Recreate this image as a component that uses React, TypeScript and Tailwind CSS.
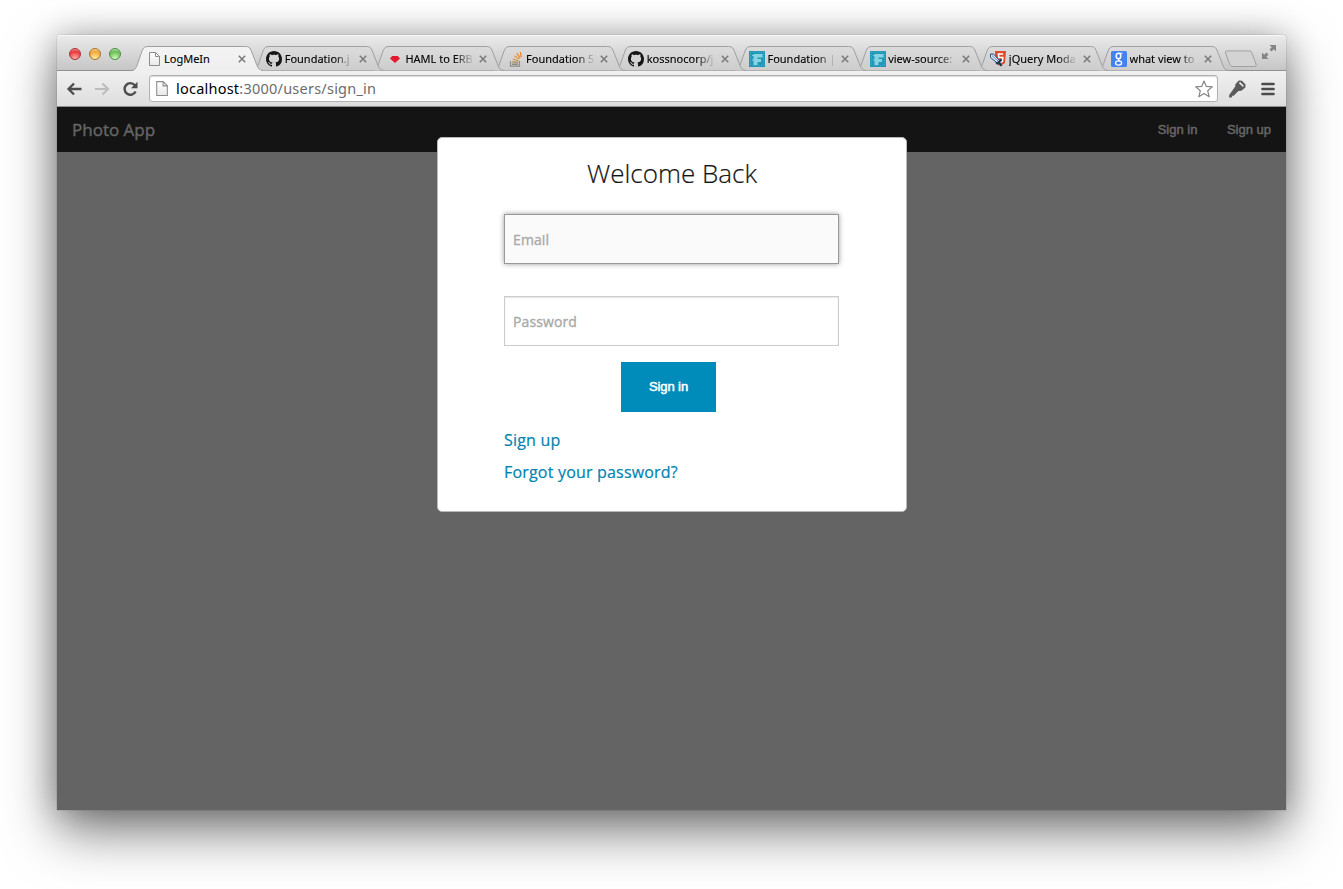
import React from "react";

type Icon = "page" | "github" | "ruby" | "stack" | "foundation" | "jquery" | "google";

function PageIcon() {
  return (
    <>
      <defs>
        <linearGradient id="sheet" x1="0" y1="0" x2="0" y2="1">
          <stop offset="0" stopColor="#fff" />
          <stop offset="1" stopColor="#e9e9e9" />
        </linearGradient>
      </defs>
      <path d="M3.5 1.5h6l4 4v9h-10z" fill="url(#sheet)" stroke="#8c8c8c" />
      <path d="M9.5 1.5v4h4" fill="none" stroke="#8c8c8c" />
    </>
  );
}

function Favicon({ icon }: { icon: Icon }) {
  return (
    <svg className="h-4 w-4 shrink-0" viewBox="0 0 16 16">
      {icon === "page" && <PageIcon />}
      {icon === "github" && (
        <path
          fill="#161616"
          d="M8 0C3.58 0 0 3.58 0 8c0 3.54 2.29 6.53 5.47 7.59.4.07.55-.17.55-.38 0-.19-.01-.82-.01-1.49-2.01.37-2.53-.49-2.69-.94-.09-.23-.48-.94-.82-1.13-.28-.15-.68-.52-.01-.53.63-.01 1.08.58 1.23.82.72 1.21 1.87.87 2.33.66.07-.52.28-.87.51-1.07-1.78-.2-3.64-.89-3.64-3.95 0-.87.31-1.59.82-2.15-.08-.2-.36-1.02.08-2.12 0 0 .67-.21 2.2.82.64-.18 1.32-.27 2-.27s1.36.09 2 .27c1.53-1.04 2.2-.82 2.2-.82.44 1.1.16 1.92.08 2.12.51.56.82 1.27.82 2.15 0 3.07-1.87 3.75-3.65 3.95.29.25.54.73.54 1.48 0 1.07-.01 1.93-.01 2.2 0 .21.15.46.55.38A8.01 8.01 0 0 0 16 8c0-4.42-3.58-8-8-8z"
        />
      )}
      {icon === "ruby" && <path d="M5.2 5h5.6L13 7.6 8 12 3 7.6z" fill="#e3192d" />}
      {icon === "stack" && (
        <g fill="none">
          <path d="M2.5 10v5.2h9V10" stroke="#8b8b8b" strokeWidth="1.2" />
          <path d="M4 13.2h6" stroke="#8b8277" strokeWidth="1.4" />
          <path d="M4.2 10.8l5.8.6" stroke="#a98a56" strokeWidth="1.3" />
          <path d="M4.8 8l5.6 1.8" stroke="#cf9547" strokeWidth="1.3" />
          <path d="M6.3 4.8l5 3.3" stroke="#ec9839" strokeWidth="1.3" />
          <path d="M8.8 2.2l3.2 4.7M12.3.8l.9 5.4" stroke="#f7882f" strokeWidth="1.3" />
        </g>
      )}
      {icon === "foundation" && (
        <>
          <path fill="#2397b8" d="M0 0h16v16H0z" />
          <path d="M1.5 1v14M14.5 1v14M4 14.5h9M4 1h9" stroke="#3badc9" strokeDasharray="1 1" />
          <path d="M4.5 14V3h9v3.500H8.5v1.500H12v3H8.500V14z" fill="#86d3e1" />
          <path d="M3 4.500h2M3 9h2" stroke="#86d3e1" />
        </>
      )}
      {icon === "jquery" && (
        <>
          <path d="M5 0h11l-1 12-4.500 3-5-2.500z" fill="#dd4b27" />
          <path d="M13.200 3H8.500l.3 3.500h4l-.4 4-2.500.8" fill="none" stroke="#fff" strokeWidth="1.600" />
          <path d="M.5 3v3.500l8 6.500 2-2.500L3.500 3z" fill="#dceaf5" stroke="#244d73" strokeWidth="1" />
          <path d="M2 4.500l7 6.500" stroke="#598bb5" />
          <path d="M6.500 13l5-4.500M9 11.500l2.500 3.500" stroke="#18385b" strokeWidth="2" />
        </>
      )}
      {icon === "google" && (
        <>
          <rect width="16" height="16" rx="1.5" fill="#4382f0" />
          <g fill="none" stroke="#fff">
            <ellipse cx="7.5" cy="5" rx="2.3" ry="2.8" strokeWidth="1.5" />
            <path d="M8 2.2h3.5M8 7.8c-1.3 1.2-.3 1.7 1 2.3" strokeWidth="1.1" />
            <ellipse cx="7.6" cy="12" rx="3" ry="2.1" strokeWidth="1.3" />
          </g>
        </>
      )}
    </svg>
  );
}

const tabs: { icon: Icon; title: string }[] = [
  { icon: "page", title: "LogMeIn" },
  { icon: "github", title: "Foundation.j" },
  { icon: "ruby", title: "HAML to ERB" },
  { icon: "stack", title: "Foundation 5" },
  { icon: "github", title: "kossnocorp/j" },
  { icon: "foundation", title: "Foundation |" },
  { icon: "foundation", title: "view-source:" },
  { icon: "jquery", title: "jQuery Moda" },
  { icon: "google", title: "what view to" },
];

function Tab({ icon, title, active, order }: { icon: Icon; title: string; active: boolean; order: number }) {
  return (
    <div className="relative h-[25px] w-[120.7px] shrink-0" style={{ zIndex: order }}>
      <svg className="absolute top-0 left-0 h-[25px] w-[134px]" viewBox="0 0 134 25">
        <defs>
          <linearGradient id="idleTab" x1="0" y1="0" x2="0" y2="1">
            <stop offset="0" stopColor="#dcdcdc" />
            <stop offset="1" stopColor="#cdcdcd" />
          </linearGradient>
          <linearGradient id="activeTab" x1="0" y1="0" x2="0" y2="1">
            <stop offset="0" stopColor="#f3f3f3" />
            <stop offset="1" stopColor="#efefef" />
          </linearGradient>
        </defs>
        <path
          d="M0 24.5C4 24.5 5 22 6 19.5L11 5C12.3 1.8 13.5.5 17 .5H114.500C118 .5 119 1.800 120.300 5L126 19.500C127 22 128.500 24.500 132 24.500"
          fill={active ? "url(#activeTab)" : "url(#idleTab)"}
          stroke="#a0a0a0"
        />
        {active && <path d="M3 24.500H130" stroke="#efefef" strokeWidth="1.200" />}
      </svg>
      <div className="relative flex h-full items-center pl-[14.500px]">
        <Favicon icon={icon} />
        <span
          className={
            "ml-[2.500px] w-[68.500px] text-[11px] leading-4 whitespace-nowrap text-black [-webkit-text-stroke:0.12px_black] " +
            (active ? "" : "[mask-image:linear-gradient(to_right,black_72%,transparent_100%)]")
          }
        >
          {title}
        </span>
        <svg className="ml-[5.500px] h-2 w-2 shrink-0" viewBox="0 0 8 8">
          <path d="M.8.8l6.400 6.400M7.200.8L.8 7.200" stroke="#7b7b7b" strokeWidth="1.600" />
        </svg>
      </div>
    </div>
  );
}

function TitleBar() {
  return (
    <div className="flex h-[36px] shrink-0 rounded-t-[4px] border-b border-[#919191] bg-linear-to-b from-[#ebebeb] to-[#c6c6c6] shadow-[inset_0_1px_0_#f8f8f8]">
      <div className="flex w-[74px] shrink-0 gap-2 pt-[13px] pl-3">
        <span className="h-3 w-3 rounded-full border border-[#a53535] bg-[radial-gradient(circle_at_50%_95%,#ffb4ac,#e9393b_65%,#ffabab)]" />
        <span className="h-3 w-3 rounded-full border border-[#a5722b] bg-[radial-gradient(circle_at_50%_95%,#fff0a0,#f0a63b_65%,#ffe5ae)]" />
        <span className="h-3 w-3 rounded-full border border-[#4b8e42] bg-[radial-gradient(circle_at_50%_95%,#d5ffb5,#69bd58_65%,#d4f4cc)]" />
      </div>
      <div className="relative z-10 mt-[11px] flex">
        {tabs.map((tab, i) => (
          <Tab key={i} icon={tab.icon} title={tab.title} active={i === 0} order={tabs.length - i} />
        ))}
      </div>
      <svg className="mt-[15px] ml-[7px] h-[18px] w-[33px] shrink-0" viewBox="0 0 33 18">
        <path
          d="M3.500.900H25C27 .900 27.500 1.500 28 3L32 14C32.500 16 32 16.500 30 16.500H9C7 16.500 6.200 15.500 5.500 13.500L1.500 3C1 1.500 1.500.900 3.500.900Z"
          fill="#d3d3d3"
          stroke="#a0a0a0"
        />
      </svg>
      <svg className="mt-[10px] ml-[5px] h-[14px] w-[14px] shrink-0" viewBox="0 0 14 14" fill="#858585">
        <path d="M7.500 0H14v6.500l-2.200-2.200-2.200 2.200-2.100-2.100 2.200-2.200zM0 7.500l2.200 2.200 2.200-2.200 2.100 2.100-2.200 2.200L6.500 14H0z" />
      </svg>
    </div>
  );
}

function Toolbar() {
  return (
    <div className="flex h-[36px] shrink-0 items-start border-b border-[#8e8e8e] bg-linear-to-b from-[#f0f0f0] to-[#dedede] pt-1">
      <div className="flex h-[27px] w-[92px] shrink-0 items-center pl-[9px]">
        <svg className="h-4 w-4" viewBox="0 0 16 16">
          <path d="M15.500 8H2.500M8 2.500L2.500 8 8 13.500" fill="none" stroke="#4d4d4d" strokeWidth="2.300" />
        </svg>
        <svg className="ml-3 h-4 w-4" viewBox="0 0 16 16">
          <path d="M1 8h13M8.500 2.500L14 8l-5.500 5.500" fill="none" stroke="#bdbdbd" strokeWidth="2.200" />
        </svg>
        <svg className="ml-3 h-4 w-4" viewBox="0 0 16 16">
          <path d="M12.800 4.200A5.800 5.800 0 1 0 13.600 10.500" fill="none" stroke="#4d4d4d" strokeWidth="2.400" />
          <path d="M15.500.7v6.500H9z" fill="#4d4d4d" />
        </svg>
      </div>
      <div className="flex h-[27px] w-[1069px] shrink-0 items-center rounded-[3px] border border-[#b2b2b2] bg-white pr-[4px] pl-[3px] shadow-[inset_0_1px_1px_#d9d9d9]">
        <svg className="h-[17px] w-[17px]" viewBox="0 0 16 16">
          <PageIcon />
        </svg>
        <span className="ml-[6px] text-[14.5px] tracking-[0.23px] whitespace-nowrap text-[#6c6c6c]">
          <span className="text-black">localhost</span>:3000/users/sign_in
        </span>
        <svg className="ml-auto h-[18px] w-[18px]" viewBox="0 0 18 18">
          <path
            d="M9 1l2.300 5.400 6 .5-4.600 3.900 1.500 6L9 13.600l-5.200 3.200 1.500-6L.7 6.900l6-.5z"
            fill="#fff"
            stroke="#858585"
            strokeWidth="1.200"
            strokeLinejoin="round"
          />
        </svg>
      </div>
      <svg className="mt-[5px] ml-[10px] h-[18px] w-[18px] shrink-0" viewBox="0 0 18 18">
        <path
          fillRule="evenodd"
          fill="#5a5a5a"
          d="M7.200 6.500L7.500 4 10.800.6l3.200.2 3.500 3.700-.1 2.900-4 3.400-3 .1-5 5-.9-.5-.9 2-2.500.2.100-2.500zM10.700 2.900l4.200 4.200 1-1.300-3.800-3.800z"
        />
      </svg>
      <svg className="mt-[7px] ml-[14.500px] h-[14px] w-[14px] shrink-0" viewBox="0 0 14 14">
        <path d="M1.500 2h11M1.500 7h11M1.500 12h11" stroke="#4c4c4c" strokeWidth="2.700" strokeLinecap="round" />
      </svg>
    </div>
  );
}

function SignInModal() {
  return (
    <section className="absolute top-[30px] left-[380px] flex h-[375px] w-[470px] flex-col rounded-[5px] border border-[#b9b9b9] bg-white px-[66px] pt-[15px]">
      <h1 className="h-[40px] text-center text-[26px] leading-[41px] font-light whitespace-nowrap text-[#151515] [-webkit-text-stroke:0.2px_#151515]">
        Welcome Back
      </h1>
      <input
        className="mt-[21px] h-[50px] w-[335px] shrink-0 border border-[#999] bg-[#fafafa] px-2 text-[14px] tracking-[0.1px] shadow-[0_0_5px_#999] outline-none [-webkit-text-stroke:0.35px] placeholder:text-[#a9a9a9]"
        placeholder="Email"
        type="email"
      />
      <input
        className="mt-[32px] h-[50px] w-[335px] shrink-0 border border-[#ccc] bg-white px-2 text-[14px] tracking-[0.1px] shadow-[inset_0_1px_2px_rgba(0,0,0,0.1)] outline-none [-webkit-text-stroke:0.35px] placeholder:text-[#a9a9a9]"
        placeholder="Password"
        type="password"
      />
      <button className="mt-[16px] ml-[117px] h-[50px] w-[95px] shrink-0 bg-[#008cba] font-['Liberation_Sans',sans-serif] text-[13px] tracking-[-0.1px] text-white [-webkit-text-stroke:0.5px_white]">
        Sign in
      </button>
      <a
        className="mt-[12px] self-start text-[16px] leading-8 tracking-[0.19px] text-[#0083b0] [-webkit-text-stroke:0.2px_#0083b0]"
        href="#signup"
      >
        Sign up
      </a>
      <a
        className="self-start text-[16px] leading-8 tracking-[0.19px] whitespace-nowrap text-[#0083b0] [-webkit-text-stroke:0.2px_#0083b0]"
        href="#password"
      >
        Forgot your password?
      </a>
    </section>
  );
}

export default function App() {
  return (
    <div className="h-[889px] w-[1343px] overflow-hidden bg-white pt-[35px] pl-[57px] font-['Open_Sans',sans-serif]">
      <div className="flex h-[775px] w-[1229px] flex-col rounded-t-[4px] shadow-[0_22px_52px_rgba(0,0,0,0.5),0_0_32px_rgba(0,0,0,0.25),0_0_1px_#555]">
        <div className="font-['Noto_Sans',sans-serif]">
          <TitleBar />
          <Toolbar />
        </div>
        <main className="relative flex-1 bg-[#646464]">
          <nav className="flex h-[45px] items-center justify-between bg-[#141414] pr-[15px] pl-[15px] text-[#666]">
            <span className="text-[17px] leading-[44px] [-webkit-text-stroke:0.4px_#666]">Photo App</span>
            <div className="flex gap-[29.500px] font-['Liberation_Sans',sans-serif] text-[13px] [-webkit-text-stroke:0.5px_#666]">
              <a href="#signin">Sign in</a>
              <a href="#signup">Sign up</a>
            </div>
          </nav>
          <SignInModal />
        </main>
      </div>
    </div>
  );
}
